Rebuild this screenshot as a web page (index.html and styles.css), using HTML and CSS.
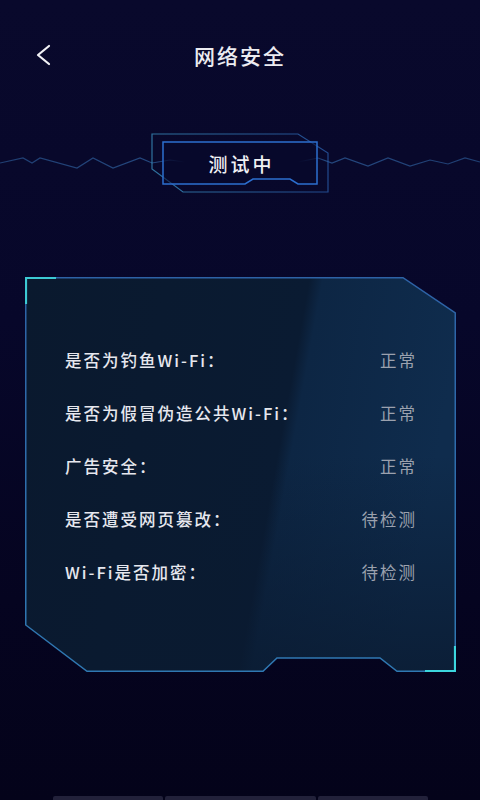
FILE: index.html
```html
<!DOCTYPE html>
<html lang="zh-CN">
<head>
<meta charset="utf-8">
<title>网络安全</title>
<link rel="stylesheet" href="styles.css">
</head>
<body>
<div class="page">
  <header class="header">
    <div class="back">
      <svg width="16" height="22" viewBox="0 0 16 22"><path d="M13 2 L2 11 L13 20" fill="none" stroke="#f2f2f6" stroke-width="2.2" stroke-linecap="round" stroke-linejoin="round"/></svg>
    </div>
    <h1 class="title">网络安全</h1>
    <div></div>
  </header>

  <section class="status">
    <svg class="status-art" width="480" height="60" viewBox="0 133 480 60">
      <defs>
        <linearGradient id="waveL" x1="0" y1="0" x2="1" y2="0">
          <stop offset="0" stop-color="#1f3e72"/>
          <stop offset="0.85" stop-color="#24477e"/>
          <stop offset="1" stop-color="#24477e" stop-opacity="0"/>
        </linearGradient>
        <linearGradient id="waveR" x1="0" y1="0" x2="1" y2="0">
          <stop offset="0" stop-color="#24477e" stop-opacity="0"/>
          <stop offset="0.15" stop-color="#24477e"/>
          <stop offset="1" stop-color="#1f3e72"/>
        </linearGradient>
        <linearGradient id="outerG" x1="0" y1="0" x2="1" y2="0">
          <stop offset="0" stop-color="#3b95c4"/>
          <stop offset="1" stop-color="#2a5fae"/>
        </linearGradient>
      </defs>
      <polyline points="0,163 23,158 32,163 40,158 77,168 93,158 113,168 140,158 152,163 170,160 185,162" fill="none" stroke="url(#waveL)" stroke-width="1.2"/>
      <polyline points="298,162 318,158 332,163 345,158 368,166 388,158 410,166 430,160 448,164 465,158 480,162" fill="none" stroke="url(#waveR)" stroke-width="1.2"/>
      <path d="M152,134 H298 L328,153 V192 H183 L152,169 Z" fill="none" stroke="url(#outerG)" stroke-width="1.2" opacity="0.75"/>
      <path d="M163,142 H317 V184 H298 L290,179 H253 L245,184 H163 Z" fill="#080a2c" fill-opacity="0.55" stroke="#2c6fd0" stroke-width="1.5"/>
    </svg>
    <span class="status-text">测试中</span>
  </section>

  <section class="card">
    <svg class="card-art" width="431" height="395" viewBox="0 0 431 395">
      <defs>
        <linearGradient id="cardFill" gradientUnits="userSpaceOnUse" x1="0" y1="0" x2="431" y2="78">
          <stop offset="0" stop-color="#0a192e"/>
          <stop offset="0.64" stop-color="#0a1b32"/>
          <stop offset="0.67" stop-color="#0d2644"/>
          <stop offset="1" stop-color="#0f2c4d"/>
        </linearGradient>
        <linearGradient id="cardShade" x1="0" y1="0" x2="0" y2="1">
          <stop offset="0" stop-color="#0a1a30" stop-opacity="0"/>
          <stop offset="0.45" stop-color="#0a1a30" stop-opacity="0"/>
          <stop offset="1" stop-color="#0a1a30" stop-opacity="0.75"/>
        </linearGradient>
        <linearGradient id="cardStroke" x1="0" y1="0" x2="0" y2="1">
          <stop offset="0" stop-color="#2d62a6"/>
          <stop offset="1" stop-color="#2f78b2"/>
        </linearGradient>
      </defs>
      <path d="M0.75,0.75 H378 L430.25,36 V394.25 H372 L355,381 H252 L238,394.25 H62 L0.75,348 Z" fill="url(#cardFill)"/>
      <path d="M0.75,0.75 H378 L430.25,36 V394.25 H372 L355,381 H252 L238,394.25 H62 L0.75,348 Z" fill="url(#cardShade)" stroke="url(#cardStroke)" stroke-width="1.5"/>
      <path d="M1,27 V1 H31" fill="none" stroke="#3cc9d4" stroke-width="2.2"/>
      <path d="M400,394 H430 V369" fill="none" stroke="#3cd6de" stroke-width="2.2"/>
    </svg>
    <ul class="rows">
      <li class="row"><span class="label">是否为钓鱼Wi-Fi：</span><span class="value">正常</span></li>
      <li class="row"><span class="label">是否为假冒伪造公共Wi-Fi：</span><span class="value">正常</span></li>
      <li class="row"><span class="label">广告安全：</span><span class="value">正常</span></li>
      <li class="row"><span class="label">是否遭受网页篡改：</span><span class="value">待检测</span></li>
      <li class="row"><span class="label">Wi-Fi是否加密：</span><span class="value">待检测</span></li>
    </ul>
  </section>

  <div class="navbar">
    <span class="seg seg-side"></span>
    <span class="seg seg-mid"></span>
    <span class="seg seg-side"></span>
  </div>
</div>
</body>
</html>
```

FILE: styles.css
```css
* { box-sizing: border-box; }

html, body {
  margin: 0;
  padding: 0;
  background: #05041c;
}

body {
  font-family: "Noto Sans CJK SC", "Noto Sans", sans-serif;
  color: #e6e7ee;
}

.page {
  width: 480px;
  height: 800px;
  overflow: hidden;
  display: flex;
  flex-direction: column;
  background: linear-gradient(180deg, #09092c 0%, #07072a 40%, #050420 75%, #04031a 100%);
}

.header {
  height: 110px;
  display: grid;
  grid-template-columns: 1fr auto 1fr;
  align-items: center;
}

.back {
  padding-left: 36px;
  display: flex;
  align-items: center;
  height: 22px;
}

.title {
  margin: 0;
  font-size: 21px;
  font-weight: 500;
  letter-spacing: 2px;
  color: #ececf1;
  line-height: 1;
}

.status {
  position: relative;
  height: 60px;
  margin-top: 23px;
  display: flex;
  align-items: center;
  justify-content: center;
}

.status-art {
  position: absolute;
  left: 0;
  top: 0;
}

.status-text {
  position: relative;
  font-size: 19px;
  font-weight: 500;
  letter-spacing: 3px;
  margin-right: -3px;
  color: #f0f0f4;
  line-height: 1;
}

.card {
  position: relative;
  width: 431px;
  height: 395px;
  margin: 84px 0 0 25px;
}

.card-art {
  position: absolute;
  left: 0;
  top: 0;
}

.rows {
  position: relative;
  list-style: none;
  margin: 0;
  padding: 57px 39px 0 40px;
  display: flex;
  flex-direction: column;
}

.row {
  height: 52.9px;
  display: flex;
  align-items: center;
  justify-content: space-between;
  font-size: 16.5px;
  letter-spacing: 2px;
  font-weight: 500;
  line-height: 1;
}

.label {
  color: #e6e7ee;
}

.value {
  color: #9ba1ae;
  font-weight: 400;
}

.navbar {
  margin: 124px 0 0 53px;
  display: flex;
  gap: 2px;
  height: 4px;
}

.seg {
  display: block;
  height: 4px;
  background: #22213a;
  border-radius: 2px 2px 0 0;
}

.seg-side { width: 110px; }
.seg-mid { width: 151px; }
```
